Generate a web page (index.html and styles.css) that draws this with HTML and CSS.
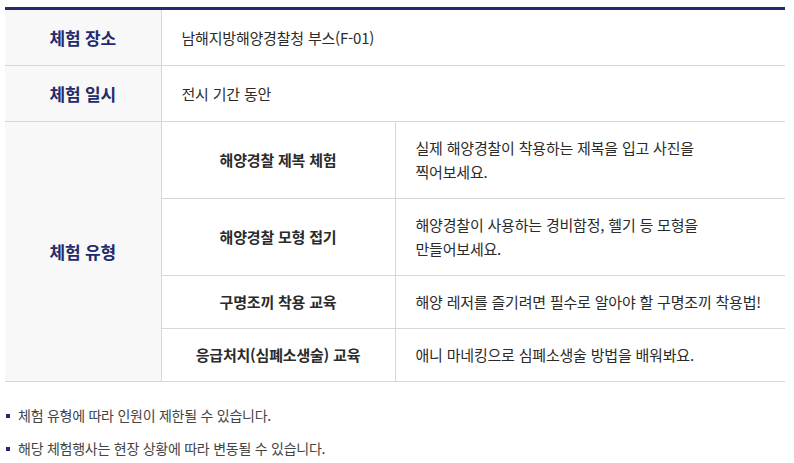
FILE: index.html
```html
<!DOCTYPE html>
<html lang="ko">
<head>
<meta charset="utf-8">
<link rel="stylesheet" href="styles.css">
</head>
<body>
<div class="wrap">
  <table class="info">
    <colgroup>
      <col class="c1">
      <col class="c2">
      <col class="c3">
    </colgroup>
    <tbody>
      <tr class="main">
        <th scope="row">체험 장소</th>
        <td colspan="2" class="val">남해지방해양경찰청 부스(F-01)</td>
      </tr>
      <tr class="main">
        <th scope="row">체험 일시</th>
        <td colspan="2" class="val">전시 기간 동안</td>
      </tr>
      <tr class="sub">
        <th scope="row" rowspan="4">체험 유형</th>
        <td class="name">해양경찰 제복 체험</td>
        <td class="val">실제 해양경찰이 착용하는 제복을 입고 사진을<br>찍어보세요.</td>
      </tr>
      <tr class="sub">
        <td class="name">해양경찰 모형 접기</td>
        <td class="val">해양경찰이 사용하는 경비함정, 헬기 등 모형을<br>만들어보세요.</td>
      </tr>
      <tr class="sub">
        <td class="name">구명조끼 착용 교육</td>
        <td class="val">해양 레저를 즐기려면 필수로 알아야 할 구명조끼 착용법!</td>
      </tr>
      <tr class="sub">
        <td class="name">응급처치(심폐소생술) 교육</td>
        <td class="val">애니 마네킹으로 심폐소생술 방법을 배워봐요.</td>
      </tr>
    </tbody>
  </table>
  <ul class="notes">
    <li>체험 유형에 따라 인원이 제한될 수 있습니다.</li>
    <li>해당 체험행사는 현장 상황에 따라 변동될 수 있습니다.</li>
  </ul>
</div>
</body>
</html>
```

FILE: styles.css
```css
html, body {
  margin: 0;
  padding: 0;
  background: #fff;
}

body {
  font-family: "Noto Sans CJK KR", "Noto Sans", sans-serif;
  color: #333;
}

.wrap {
  padding: 7px 9px 0 5px;
}

.info {
  width: 780px;
  border-collapse: collapse;
  table-layout: fixed;
  border-top: 3px solid #232a6d;
  border-bottom: 1px solid #d6d6d6;
}

.c1 { width: 156px; }
.c2 { width: 234px; }
.c3 { width: auto; }

.info th,
.info td {
  border-bottom: 1px solid #d6d6d6;
  padding: 0;
  vertical-align: middle;
}

.info th {
  background: #f8f8f8;
  color: #232a6d;
  font-size: 17px;
  font-weight: 700;
  letter-spacing: -0.2px;
  text-align: center;
  border-right: 1px solid #d6d6d6;
}

.info td {
  font-size: 15px;
  letter-spacing: -0.2px;
  line-height: 24px;
}

.main th,
.main td {
  height: 55px;
}

.sub td {
  padding-top: 14px;
  padding-bottom: 14px;
}

.val {
  text-align: left;
  padding-left: 20px !important;
  color: #2b2b2b;
}

.name {
  text-align: center;
  font-weight: 700;
  color: #2b2b2b;
  border-right: 1px solid #d6d6d6;
}

.notes {
  list-style: none;
  margin: 23px 0 0 0;
  padding: 0;
}

.notes li {
  position: relative;
  padding-left: 13px;
  font-size: 14px;
  line-height: 20px;
  letter-spacing: -0.25px;
  color: #444;
}

.notes li + li {
  margin-top: 13px;
}

.notes li::before {
  content: "";
  position: absolute;
  left: 1px;
  top: 9px;
  width: 4px;
  height: 4px;
  background: #232a6d;
}
```
